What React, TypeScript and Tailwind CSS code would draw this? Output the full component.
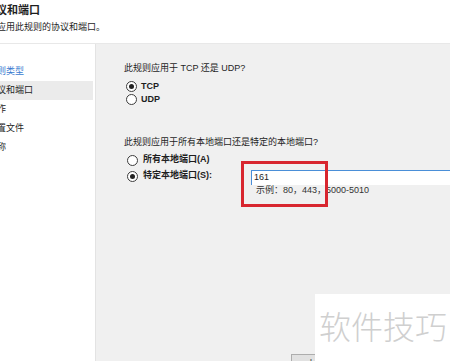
import React from "react"

const steps = [
  { label: "规则类型", state: "link" },
  { label: "协议和端口", state: "active" },
  { label: "操作", state: "" },
  { label: "配置文件", state: "" },
  { label: "名称", state: "" },
]

const cjk = "font-['Liberation_Sans','Noto_Sans_CJK_SC',sans-serif]"

function Radio({ checked }: { checked?: boolean }) {
  return (
    <span className="flex h-[11px] w-[11px] shrink-0 items-center justify-center rounded-full border border-[#3c3c3c] bg-white">
      {checked && <span className="h-[5px] w-[5px] rounded-full bg-[#222]" />}
    </span>
  )
}

export default function App() {
  return (
    <div className={`relative h-[361px] w-[450px] overflow-hidden bg-white text-[#1e1e1e] ${cjk}`}>
      <header className="h-[44px] border-b border-[#e8e8e8] bg-white">
        <h1 className="ml-[-15px] pt-[3px] text-[11px] font-bold leading-[14px] whitespace-nowrap">协议和端口</h1>
        <p className="ml-[-21px] mt-[4px] text-[9px] leading-[12px] whitespace-nowrap">指定应用此规则的协议和端口。</p>
      </header>

      <div className="flex h-[317px]">
        <nav className="w-[96px] shrink-0 border-r border-[#e3e3e3] bg-white pt-[18px]">
          {steps.map((s) => (
            <div
              key={s.label}
              className={`flex h-[19px] items-center text-[9px] whitespace-nowrap ${
                s.state === "active" ? "mr-[2px] bg-[#ebebeb]" : ""
              } ${s.state === "link" ? "text-[#3a7bd0]" : ""}`}
            >
              <span className="ml-[-12px] mt-[1px]">{s.label}</span>
            </div>
          ))}
        </nav>

        <main className="flex flex-1 flex-col bg-[#f0f0f0] pl-[28px] pt-[18px]">
          <p className="h-[12px] text-[9px] leading-[12px] whitespace-nowrap">此规则应用于 TCP 还是 UDP?</p>
          <div className="mt-[6px] flex flex-col">
            <label className="flex h-[13px] items-center gap-[4px] pl-[2px] text-[9px] font-bold">
              <Radio checked />
              TCP
            </label>
            <label className="flex h-[13px] items-center gap-[4px] pl-[2px] text-[9px] font-bold">
              <Radio />
              UDP
            </label>
          </div>

          <p className="mt-[30px] h-[12px] text-[9px] leading-[12px] whitespace-nowrap">此规则应用于所有本地端口还是特定的本地端口?</p>
          <div className="mt-[4px] flex flex-col">
            <label className="flex h-[16px] items-center gap-[5px] pl-[3px] text-[9px] font-bold whitespace-nowrap">
              <Radio />
              所有本地端口(A)
            </label>
            <div className="flex h-[17px] items-start">
              <label className="flex h-[16px] w-[127px] shrink-0 items-center gap-[5px] pl-[3px] text-[9px] font-bold whitespace-nowrap">
                <Radio checked />
                特定本地端口(S):
              </label>
              <div className="mt-[2px] flex h-[15px] flex-1 items-center border-l border-t border-[#4a8fd8] bg-white pl-[2px] text-[9px]">
                161
              </div>
            </div>
            <p className="ml-[132px] h-[10px] text-[9px] leading-[10px] text-[#333] whitespace-nowrap">示例：80，443，5000-5010</p>
          </div>

          <div className="ml-[167px] mt-[159px]">
            <button className="flex h-[22px] items-center border border-[#adadad] bg-[#e1e1e1] px-[7px] text-[9px] whitespace-nowrap">
              &lt; 上一步(B)
            </button>
          </div>
        </main>
      </div>

      {/* annotation */}
      <div className="absolute left-[241px] top-[161px] h-[46px] w-[87px] border-[3px] border-[#d8262f]" />

      {/* watermark */}
      <div className="absolute bottom-0 left-[315px] right-0 top-[294px] bg-white pl-[4px] pt-[13px]">
        <span className="text-[32px] font-light leading-[36px] text-[#cfcfcf] whitespace-nowrap font-['Noto_Sans_CJK_SC',sans-serif]">
          软件技巧
        </span>
      </div>
    </div>
  )
}
